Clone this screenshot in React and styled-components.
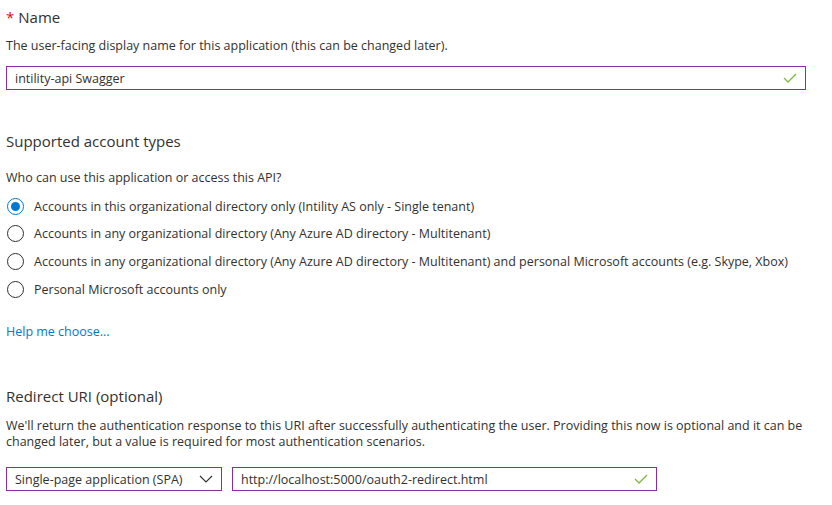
import React from 'react'
import styled, { createGlobalStyle } from 'styled-components'

const GlobalStyle = createGlobalStyle`
  body {
    margin: 0;
    background: #ffffff;
    font-family: "Open Sans", "Noto Sans", sans-serif;
    color: #323130;
  }
`

const Page = styled.div`
  width: 832px;
  height: 505px;
  padding: 6px 26px 0 6px;
  box-sizing: border-box;
  overflow: hidden;
`

const Section = styled.section`
  margin-bottom: ${p => p.$gap || 0}px;
`

const Heading = styled.h2`
  margin: 0;
  font-size: 15px;
  font-weight: 400;
  line-height: 22px;
  color: #323130;
`

const Required = styled.span`
  color: #e00b1c;
  margin-right: 4px;
`

const Description = styled.p`
  margin: ${p => p.$top || 12}px 0 0;
  font-size: 12.5px;
  line-height: 16px;
  color: #323130;
`

const Field = styled.div`
  display: flex;
  align-items: center;
  box-sizing: border-box;
  width: ${p => p.$width}px;
  height: 24px;
  border: 1px solid #8a2da5;
  padding: 0 8px;
  font-size: 12.5px;
  color: #323130;
`

const FieldText = styled.span`
  flex: 1;
  white-space: nowrap;
`

const Check = () => (
  <svg width="14" height="10" viewBox="0 0 14 10">
    <path d="M1 5 L5 9 L13 1" fill="none" stroke="#7fb843" strokeWidth="1.3" />
  </svg>
)

const Chevron = () => (
  <svg width="14" height="8" viewBox="0 0 14 8">
    <path d="M1 1 L7 7 L13 1" fill="none" stroke="#323130" strokeWidth="1.1" />
  </svg>
)

const RadioList = styled.div`
  display: flex;
  flex-direction: column;
  gap: 11.7px;
  margin-top: 12px;
`

const RadioRow = styled.label`
  display: flex;
  align-items: center;
  gap: 10px;
  height: 16px;
  font-size: 12.5px;
  white-space: nowrap;
`

const Circle = styled.span`
  position: relative;
  width: 17px;
  height: 17px;
  box-sizing: border-box;
  border-radius: 50%;
  border: 1px solid ${p => (p.$checked ? '#0078d4' : '#323130')};
  flex-shrink: 0;
  margin-left: 1px;

  &::after {
    content: '';
    display: ${p => (p.$checked ? 'block' : 'none')};
    position: absolute;
    left: 3px;
    top: 3px;
    width: 9px;
    height: 9px;
    border-radius: 50%;
    background: #0078d4;
  }
`

const Link = styled.a`
  display: inline-block;
  margin-top: 27px;
  font-size: 12.5px;
  line-height: 16px;
  color: #0078d4;
  text-decoration: none;
`

const UriRow = styled.div`
  display: flex;
  gap: 10px;
  margin-top: 17px;
`

const accountTypes = [
  { label: 'Accounts in this organizational directory only (Intility AS only - Single tenant)', checked: true },
  { label: 'Accounts in any organizational directory (Any Azure AD directory - Multitenant)' },
  { label: 'Accounts in any organizational directory (Any Azure AD directory - Multitenant) and personal Microsoft accounts (e.g. Skype, Xbox)' },
  { label: 'Personal Microsoft accounts only' },
]

export default function App() {
  return (
    <Page>
      <GlobalStyle />
      <Section $gap={40}>
        <Heading><Required>*</Required>Name</Heading>
        <Description $top={10}>The user-facing display name for this application (this can be changed later).</Description>
        <div style={{ marginTop: 12 }}>
          <Field $width={800}>
            <FieldText>intility-api Swagger</FieldText>
            <Check />
          </Field>
        </div>
      </Section>

      <Section $gap={44}>
        <Heading>Supported account types</Heading>
        <Description $top={18}>Who can use this application or access this API?</Description>
        <RadioList>
          {accountTypes.map(a => (
            <RadioRow key={a.label}>
              <Circle $checked={a.checked} />
              {a.label}
            </RadioRow>
          ))}
        </RadioList>
        <Link href="#">Help me choose...</Link>
      </Section>

      <Section>
        <Heading>Redirect URI (optional)</Heading>
        <Description $top={11}>
          We'll return the authentication response to this URI after successfully authenticating the user. Providing this now is optional and it can be changed later, but a value is required for most authentication scenarios.
        </Description>
        <UriRow>
          <Field $width={216}>
            <FieldText>Single-page application (SPA)</FieldText>
            <Chevron />
          </Field>
          <Field $width={425}>
            <FieldText>http://localhost:5000/oauth2-redirect.html</FieldText>
            <Check />
          </Field>
        </UriRow>
      </Section>
    </Page>
  )
}
